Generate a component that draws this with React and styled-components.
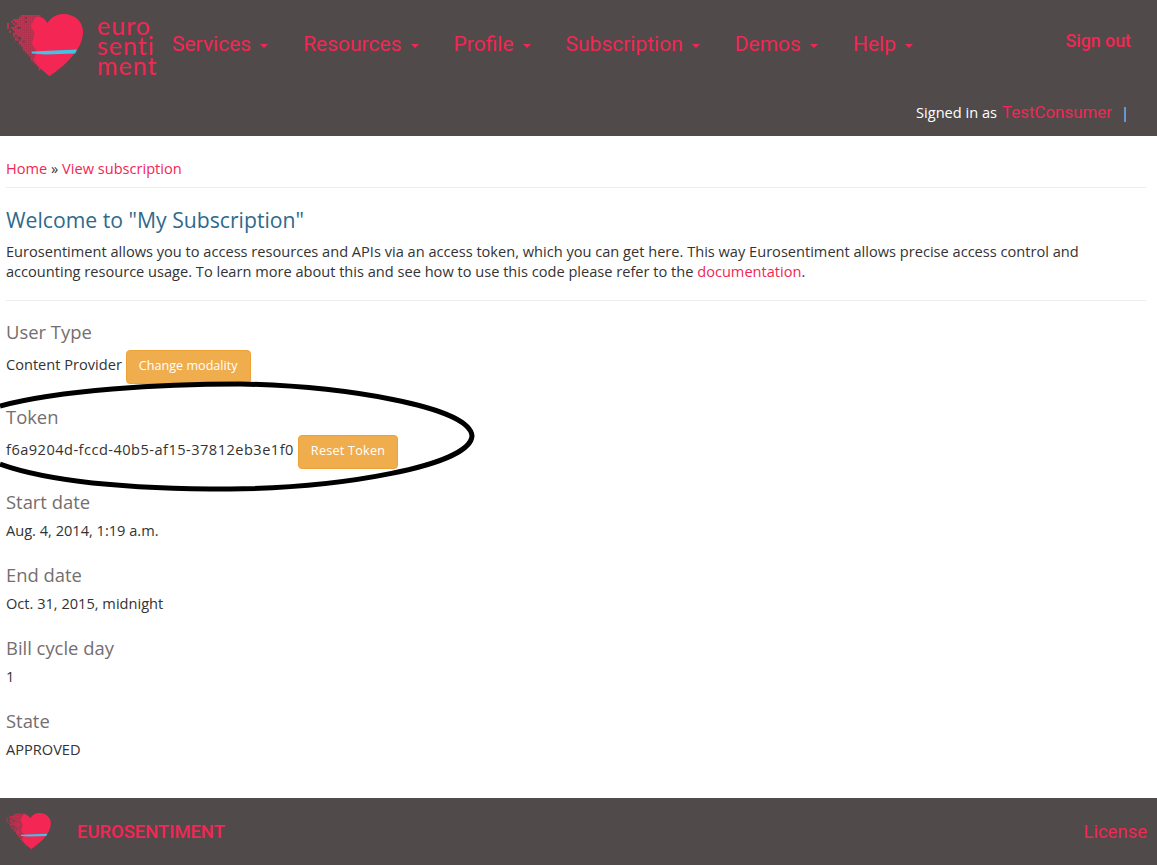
import React from 'react';
import styled, { createGlobalStyle } from 'styled-components';

const RED = '#f32654';
const DARK = '#504a4a';

const GlobalStyle = createGlobalStyle`
  html, body {
    margin: 0;
    padding: 0;
    background: #fff;
  }
  body {
    font-family: "Open Sans", "Liberation Sans", sans-serif;
    font-size: 14.6px;
    line-height: 20px;
    color: #333;
  }
`;

const Page = styled.div`
  position: relative;
  display: flex;
  flex-direction: column;
  width: 1157px;
  height: 865px;
  overflow: hidden;
`;

const Header = styled.header`
  display: flex;
  flex-direction: column;
  height: 136px;
  background: ${DARK};
`;

const TopRow = styled.div`
  display: flex;
  align-items: flex-start;
  height: 100px;
  padding: 14px 26px 0 6px;
  box-sizing: border-box;
`;

const LogoText = styled.div`
  width: 64px;
  margin-left: 12px;
  margin-top: 1px;
  font-family: Lato, sans-serif;
  font-weight: 400;
  font-size: 25px;
  line-height: 20px;
  letter-spacing: 1px;
  color: ${RED};
`;

const Nav = styled.nav`
  display: flex;
  gap: 35px;
  margin-top: 16px;
  margin-left: 11px;
`;

const NavItem = styled.a`
  display: flex;
  align-items: center;
  gap: 9px;
  font-family: Roboto, sans-serif;
  font-size: 21px;
  line-height: 28px;
  color: ${RED};
`;

const Caret = styled.span`
  width: 0;
  height: 0;
  margin-top: 3px;
  border-left: 4px solid transparent;
  border-right: 4px solid transparent;
  border-top: 4px solid ${RED};
`;

const SignOut = styled.a`
  margin-left: auto;
  margin-top: 16px;
  font-family: Roboto, sans-serif;
  font-weight: 500;
  font-size: 17.8px;
  line-height: 22px;
  color: ${RED};
`;

const UserRow = styled.div`
  display: flex;
  align-items: baseline;
  justify-content: flex-end;
  gap: 5px;
  padding-right: 28px;
  font-size: 14.6px;
  line-height: 24px;
  color: #fff;
`;

const UserName = styled.a`
  margin-right: 4px;
  font-family: Roboto, sans-serif;
  font-size: 16.9px;
  color: ${RED};
`;

const Pipe = styled.span`
  color: #a8d0f0;
`;

const Main = styled.main`
  flex: 1;
  padding: 22px 11px 0 6px;
`;

const Crumbs = styled.div`
  padding-bottom: 9px;
  border-bottom: 1px solid #eee;
`;

const Link = styled.a`
  color: ${RED};
`;

const Title = styled.h3`
  margin: 19px 0 8px;
  font-size: 21.2px;
  font-weight: 400;
  line-height: 26px;
  color: #2e6a8c;
`;

const Intro = styled.p`
  margin: 0;
  padding-bottom: 19px;
  border-bottom: 1px solid #eee;
`;

const Field = styled.section`
  height: ${(p) => (p.$tall ? '85px' : '73px')};
  box-sizing: border-box;
  padding-top: 20px;
`;

const Label = styled.h4`
  margin: 0;
  font-size: 18.4px;
  font-weight: 400;
  line-height: 22px;
  color: #746e6e;
`;

const Value = styled.div`
  display: flex;
  align-items: baseline;
  gap: 4px;
  margin-top: 7px;
`;

const Token = styled.span`
  letter-spacing: 0.47px;
`;

const Button = styled.button`
  height: 34px;
  padding: 0 12px 4px;
  border: 1px solid #eea236;
  border-radius: 4px;
  background: #f0ad4e;
  font-family: inherit;
  font-size: 12.6px;
  letter-spacing: ${(p) => (p.$spaced ? '0.25px' : '0')};
  color: #fff;
`;

const Footer = styled.footer`
  display: flex;
  align-items: center;
  height: 67px;
  padding: 0 10px 0 6px;
  background: ${DARK};
`;

const Brand = styled.a`
  margin-left: 25px;
  font-family: Roboto, sans-serif;
  font-weight: 500;
  font-size: 18.4px;
  color: ${RED};
`;

const License = styled.a`
  margin-left: auto;
  font-family: Roboto, sans-serif;
  font-size: 18.5px;
  color: ${RED};
`;

const Annotation = styled.svg`
  position: absolute;
  left: 0;
  top: 370px;
  pointer-events: none;
`;

// the left lobe of the heart falls apart into loose pixels
const dots = [];
for (let x = 1; x < 34; x += 2) {
  for (let y = 1; y < 62; y += 2) {
    const inside = y > 9 - x * 0.6 && y < 14 + x * 1.25;
    const noise = Math.abs(Math.sin(x * 12.9898 + y * 78.233) * 43758.5453) % 1;
    if (inside && noise < 0.4 + x / 34) {
      dots.push([x, y]);
    }
  }
}

const Heart = ({ width }) => (
  <svg width={width} viewBox="0 0 80 64" style={{ flexShrink: 0 }}>
    {dots.map(([x, y]) => (
      <rect key={`${x}-${y}`} x={x} y={y} width="2" height="2" fill={RED} opacity="0.75" />
    ))}
    <path
      d="M42 9 C47 2 53 0 58 0 C70 0 78 8 78 18 C78 36 60 52 44 63 C38 58 32 53 28 47 L31 38 L26 30 L29 20 L25 12 L30 3 C35 2 39 4 42 9 Z"
      fill={RED}
    />
    <path d="M26 38 L72 36 L70 40 L40 41 L26 40 Z" fill="#3fc4e6" />
  </svg>
);

const menu = ['Services', 'Resources', 'Profile', 'Subscription', 'Demos', 'Help'];

const fields = [
  ['Start date', 'Aug. 4, 2014, 1:19 a.m.'],
  ['End date', 'Oct. 31, 2015, midnight'],
  ['Bill cycle day', '1'],
  ['State', 'APPROVED'],
];

const App = () => (
  <Page>
    <GlobalStyle />
    <Header>
      <TopRow>
        <Heart width={79} />
        <LogoText>euro senti ment</LogoText>
        <Nav>
          {menu.map((item) => (
            <NavItem key={item}>
              {item}
              <Caret />
            </NavItem>
          ))}
        </Nav>
        <SignOut>Sign out</SignOut>
      </TopRow>
      <UserRow>
        Signed in as <UserName>TestConsumer</UserName>
        <Pipe>|</Pipe>
      </UserRow>
    </Header>
    <Main>
      <Crumbs>
        <Link>Home</Link> » <Link>View subscription</Link>
      </Crumbs>
      <Title>Welcome to "My Subscription"</Title>
      <Intro>
        Eurosentiment allows you to access resources and APIs via an access token, which you can get here. This way
        Eurosentiment allows precise access control and
        <br />
        accounting resource usage. To learn more about this and see how to use this code please refer to the{' '}
        <Link>documentation</Link>.
      </Intro>
      <Field $tall>
        <Label>User Type</Label>
        <Value>
          Content Provider <Button>Change modality</Button>
        </Value>
      </Field>
      <Field $tall>
        <Label>Token</Label>
        <Value>
          <Token>f6a9204d-fccd-40b5-af15-37812eb3e1f0</Token> <Button $spaced>Reset Token</Button>
        </Value>
      </Field>
      {fields.map(([label, value]) => (
        <Field key={label}>
          <Label>{label}</Label>
          <Value>{value}</Value>
        </Field>
      ))}
    </Main>
    <Footer>
      <Heart width={46} />
      <Brand>EUROSENTIMENT</Brand>
      <License>License</License>
    </Footer>
    <Annotation width="480" height="130" viewBox="0 0 480 130">
      <path
        d="M0 36 C60 20 160 14 240 14 C340 16 470 36 472 66 C470 96 340 118 230 119 C130 119 50 112 0 94"
        fill="none"
        stroke="#000"
        strokeWidth="5"
      />
    </Annotation>
  </Page>
);

export default App;
